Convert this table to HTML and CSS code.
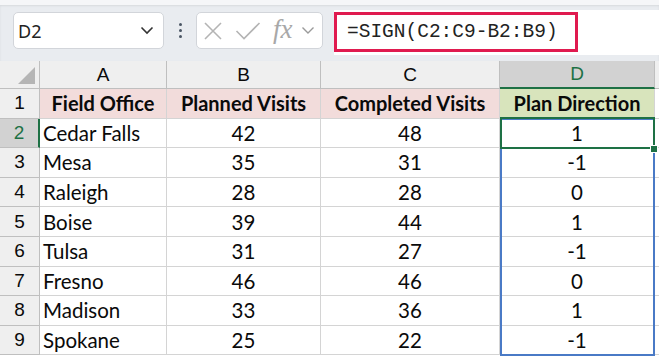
FILE: index.html
```html
<!DOCTYPE html>
<html>
<head>
<meta charset="utf-8">
<link rel="stylesheet" href="styles.css">
</head>
<body>
<div class="app">
  <div class="toolbar">
    <div class="namebox">
      <span class="name">D2</span>
      <svg class="chev" width="14" height="9" viewBox="0 0 14 9"><path d="M1.5 1.5 L7 7 L12.5 1.5" fill="none" stroke="#333" stroke-width="1.6"/></svg>
    </div>
    <div class="dots"><i></i><i></i><i></i></div>
    <div class="fxbox">
      <svg width="20" height="20" viewBox="0 0 20 20"><path d="M2 2 L18 18 M18 2 L2 18" stroke="#b4b4b4" stroke-width="1.6" fill="none"/></svg>
      <svg width="26" height="20" viewBox="0 0 26 20"><path d="M1.5 10 L9 17.5 L24.5 2" stroke="#b4b4b4" stroke-width="1.6" fill="none"/></svg>
      <span class="fx">fx</span>
      <svg class="fxchev" width="14" height="9" viewBox="0 0 14 9"><path d="M1.5 1.5 L7 7 L12.5 1.5" fill="none" stroke="#9a9a9a" stroke-width="1.4"/></svg>
    </div>
    <div class="formula">
      <div class="ftext">=SIGN(C2:C9-B2:B9)</div>
    </div>
  </div>
  <div class="sheet">
    <div class="corner"><span class="tri"></span></div>
    <div class="ch">A</div>
    <div class="ch">B</div>
    <div class="ch">C</div>
    <div class="ch sel">D</div>
    <div class="ch end"></div>

    <div class="rh">1</div>
    <div class="c hd pink">Field Office</div>
    <div class="c hd pink">Planned Visits</div>
    <div class="c hd pink">Completed Visits</div>
    <div class="c hd green">Plan Direction</div>
    <div class="c end"></div>

    <div class="rh sel">2</div>
    <div class="c l">Cedar Falls</div><div class="c">42</div><div class="c">48</div><div class="c">1</div><div class="c end"></div>
    <div class="rh">3</div>
    <div class="c l">Mesa</div><div class="c">35</div><div class="c">31</div><div class="c">-1</div><div class="c end"></div>
    <div class="rh">4</div>
    <div class="c l">Raleigh</div><div class="c">28</div><div class="c">28</div><div class="c">0</div><div class="c end"></div>
    <div class="rh">5</div>
    <div class="c l">Boise</div><div class="c">39</div><div class="c">44</div><div class="c">1</div><div class="c end"></div>
    <div class="rh">6</div>
    <div class="c l">Tulsa</div><div class="c">31</div><div class="c">27</div><div class="c">-1</div><div class="c end"></div>
    <div class="rh">7</div>
    <div class="c l">Fresno</div><div class="c">46</div><div class="c">46</div><div class="c">0</div><div class="c end"></div>
    <div class="rh">8</div>
    <div class="c l">Madison</div><div class="c">33</div><div class="c">36</div><div class="c">1</div><div class="c end"></div>
    <div class="rh">9</div>
    <div class="c l">Spokane</div><div class="c">25</div><div class="c">22</div><div class="c">-1</div><div class="c end"></div>

    <div class="spill"></div>
    <div class="active"></div>
    <span class="handle"></span>
  </div>
</div>
</body>
</html>
```

FILE: styles.css
```css
* { box-sizing: border-box; }
html, body { margin: 0; padding: 0; background: #fff; }
.app { width: 659px; height: 358px; overflow: hidden; }

.toolbar {
  height: 61px;
  background: #e9ecf0;
  display: flex;
  align-items: flex-start;
  padding-left: 13px;
  border-top: 5px solid #f5f6f8;
  box-shadow: inset 0 1px 2px rgba(0,0,0,0.08);
  padding-top: 7px;
}
.namebox {
  width: 151px; height: 37px;
  background: #fff;
  border: 1px solid #d2d5da;
  border-radius: 5px;
  display: flex; align-items: center; justify-content: space-between;
  padding: 0 9px 0 4px;
  font-family: "Noto Sans", sans-serif;
  font-size: 18px; color: #222;
}
.dots { width: 32px; height: 37px; display: flex; flex-direction: column; align-items: center; justify-content: center; gap: 3px; }
.dots i { width: 3px; height: 3px; border-radius: 50%; background: #4a5563; display: block; }
.fxbox {
  width: 127px; height: 37px;
  background: #fff;
  border: 1px solid #d2d5da;
  border-radius: 5px;
  display: flex; align-items: center;
  padding-left: 6px;
  gap: 12px;
}
.fx { font-family: "Liberation Serif", serif; font-style: italic; font-size: 27px; color: #a8a8a8; margin-top: -3px; letter-spacing: 0px; }
.fxbox .fxchev { margin-left: -4px; }
.formula {
  margin-left: 11px;
  flex: 1;
  height: 45px;
  margin-top: -2px;
  background: #fff;
  padding-top: 2px;
}
.ftext {
  width: 244px; height: 40px;
  border: 3px solid #e01a4f;
  font-family: "Liberation Mono", monospace;
  font-size: 19.5px;
  color: #222;
  padding-left: 10px;
  line-height: 34px;
}

.sheet {
  position: relative;
  display: grid;
  grid-template-columns: 40px 127px 154px 179px 155px 1fr;
  grid-template-rows: 28px repeat(9, 29.6px);
  font-family: "Lato", sans-serif;
  font-size: 20.5px;
  color: #0a0a0a;
}
.corner { background: #efefef; border-right: 1px solid #bfbfbf; border-bottom: 1px solid #bfbfbf; position: relative; }
.tri { position: absolute; right: 4px; bottom: 4px; width: 0; height: 0; border-left: 17px solid transparent; border-bottom: 17px solid #b5b5b5; }
.ch { background: #efefef; border-right: 1px solid #bfbfbf; border-bottom: 1px solid #bfbfbf; display: flex; align-items: center; justify-content: center; font-family: "Liberation Sans", sans-serif; font-size: 19px; }
.ch.sel { background: #d2d2d2; color: #1e7145; border-bottom: 2px solid #1e7145; }
.ch.end { border-right: none; }
.rh { background: #efefef; border-right: 1px solid #bfbfbf; border-bottom: 1px solid #bfbfbf; display: flex; align-items: center; justify-content: center; font-family: "Liberation Sans", sans-serif; font-size: 19px; }
.rh.sel { background: #d2d2d2; color: #1e7145; border-right: 2px solid #1e7145; }
.c { border-right: 1px solid #d4d4d4; border-bottom: 1px solid #d4d4d4; display: flex; align-items: center; justify-content: center; white-space: nowrap; overflow: hidden; }
.c.l { justify-content: flex-start; padding-left: 3px; }
.c.end { border-right: none; }
.hd { font-weight: 700; font-size: 20px; }
.pink { background: #f2dcdb; }
.green { background: #d8e4bc; }

.spill { position: absolute; left: 500px; top: 57px; width: 155px; height: 238px; border: 2px solid #4a7ac6; }
.active { position: absolute; left: 500px; top: 56px; width: 155px; height: 32px; border: 2px solid #1e7145; }
.handle { position: absolute; left: 650px; top: 84px; width: 8px; height: 8px; background: #1e7145; border: 1px solid #fff; }
```
